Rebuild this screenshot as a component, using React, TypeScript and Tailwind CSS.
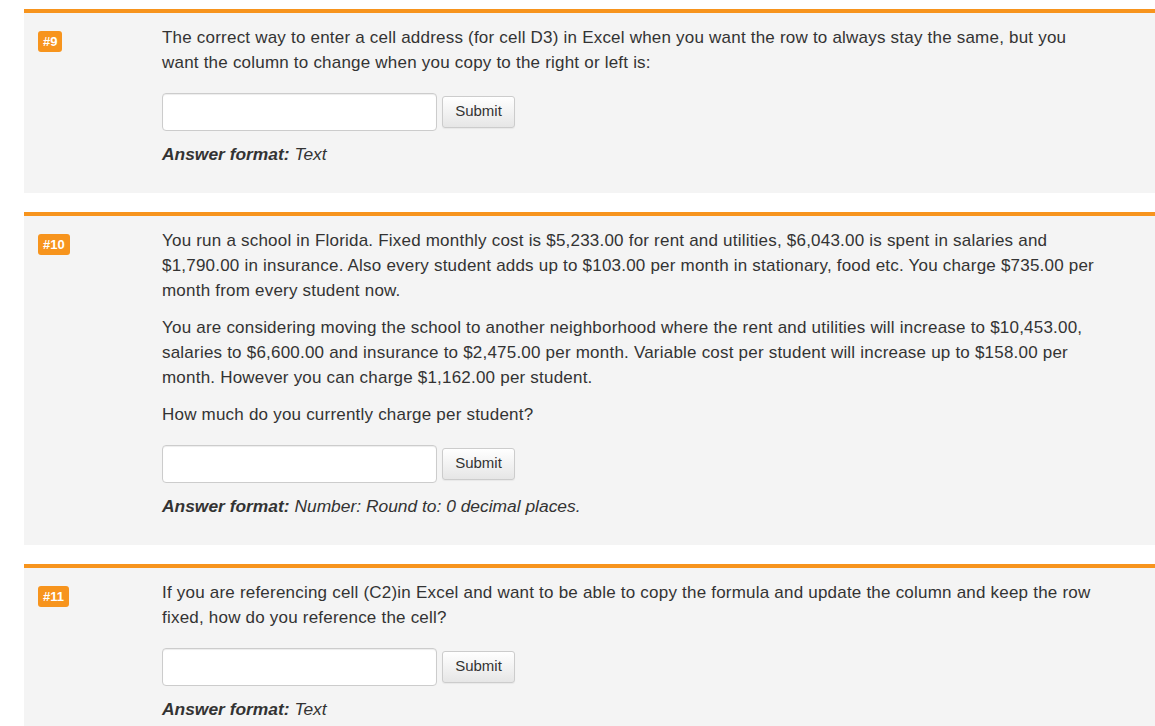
const questions = [
  {
    num: 9,
    paragraphs: [
      "The correct way to enter a cell address (for cell D3) in Excel when you want the row to always stay the same, but you want the column to change when you copy to the right or left is:",
    ],
    format: "Text",
  },
  {
    num: 10,
    paragraphs: [
      "You run a school in Florida. Fixed monthly cost is $5,233.00 for rent and utilities, $6,043.00 is spent in salaries and $1,790.00 in insurance. Also every student adds up to $103.00 per month in stationary, food etc. You charge $735.00 per month from every student now.",
      "You are considering moving the school to another neighborhood where the rent and utilities will increase to $10,453.00, salaries to $6,600.00 and insurance to $2,475.00 per month. Variable cost per student will increase up to $158.00 per month. However you can charge $1,162.00 per student.",
      "How much do you currently charge per student?",
    ],
    format: "Number: Round to: 0 decimal places.",
  },
  {
    num: 11,
    paragraphs: [
      "If you are referencing cell (C2)in Excel and want to be able to copy the formula and update the column and keep the row fixed, how do you reference the cell?",
    ],
    format: "Text",
  },
];

function QuestionCard({ num, paragraphs, format }: { num: number; paragraphs: string[]; format: string }) {
  return (
    <div className="ml-[24px] bg-[#f4f4f4] border-t-4 border-[#f7941d] flex pl-[14px] pr-[50px] pt-[12px] pb-[26px]">
      <div className="w-[124px] shrink-0 pt-[4px]">
        <span className="inline-block bg-[#f7941d] text-white text-[13px] font-bold leading-[21px] px-[5px] rounded-[3px]">
          #{num}
        </span>
      </div>
      <div className="flex-1 text-[17px] leading-[25px] text-[#333]">
        <div className="flex flex-col gap-[12px] tracking-[0.21px]">
          {paragraphs.map((p, i) => (
            <p key={i}>{p}</p>
          ))}
        </div>
        <div className="flex items-center mt-[18px]">
          <input
            type="text"
            className="w-[275px] h-[38px] bg-white border border-[#ccc] rounded-[4px] shadow-[inset_0_1px_1px_rgba(0,0,0,0.075)] px-3 outline-none"
          />
          <button className="ml-[5px] w-[73px] h-[32px] pb-[3px] text-[15px] text-[#333] border border-[#ccc] rounded-[3px] bg-gradient-to-b from-white to-[#e6e6e6] shadow-[0_1px_1px_rgba(0,0,0,0.05)]">
            Submit
          </button>
        </div>
        <p className="mt-[11px] italic text-[17.4px]">
          <span className="font-bold">Answer format:</span> {format}
        </p>
      </div>
    </div>
  );
}

export default function App() {
  return (
    <div className="w-[1155px] h-[726px] overflow-hidden bg-white pt-[9px] font-['Liberation_Sans',Arial,sans-serif]">
      <div className="flex flex-col gap-[19px]">
        {questions.map((q) => (
          <QuestionCard key={q.num} {...q} />
        ))}
      </div>
    </div>
  );
}
